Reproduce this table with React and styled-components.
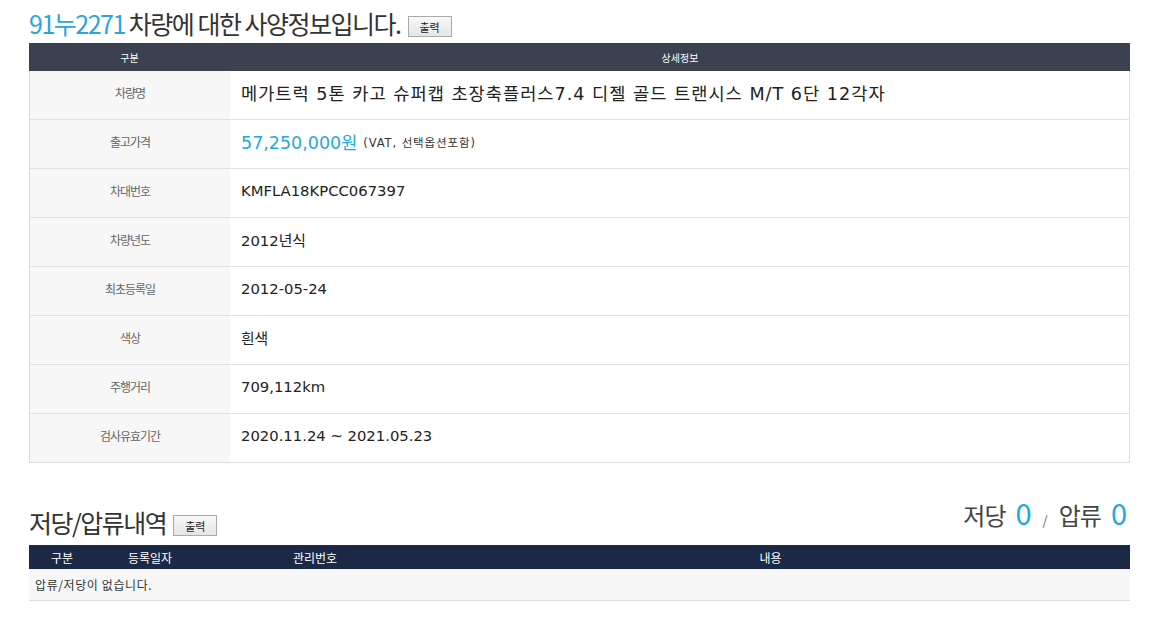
import React from 'react';
import styled, { createGlobalStyle } from 'styled-components';

const GlobalStyle = createGlobalStyle`
  body {
    margin: 0;
    background: #fff;
    font-family: 'Noto Sans CJK KR', 'Noto Sans', sans-serif;
    color: #333;
  }
`;

const Page = styled.div`
  width: 1101px;
  padding: 0 0 0 29px;
`;

const TitleRow = styled.div`
  display: flex;
  align-items: flex-end;
  justify-content: space-between;
  height: ${p => p.height || 43}px;
`;

const TitleLeft = styled.div`
  display: flex;
  align-items: center;
  padding-bottom: ${p => p.pb || 6}px;
`;

const Title = styled.h2`
  margin: 0;
  font-size: ${p => p.size || 25}px;
  font-weight: 400;
  letter-spacing: -1.5px;
  color: #333;
  line-height: 1;
  span { color: #2ea4dc; }
`;

const PrintButton = styled.button`
  margin-left: ${p => p.gap || 7}px;
  margin-top: 6px;
  width: 44px;
  height: 21px;
  padding: 0;
  font-family: 'Noto Sans CJK KR', sans-serif;
  font-size: 11px;
  color: #222;
  background: linear-gradient(#f8f8f8, #e6e6e6);
  border: 1px solid #aaa;
  border-radius: 0;
`;

const SpecTable = styled.div`
  border: 1px solid #ddd;
  border-top: none;
`;

const SpecHead = styled.div`
  display: grid;
  grid-template-columns: 201px 1fr;
  height: 28px;
  background: #3b414f;
  color: #fff;
  font-size: 10px;
  align-items: center;
  text-align: center;
  margin: 0 -1px;
`;

const SpecRow = styled.div`
  display: grid;
  grid-template-columns: 200px 1fr;
  height: 48px;
  border-bottom: 1px solid #e1e1e1;
  &:last-child { border-bottom: none; }
`;

const Label = styled.div`
  background: #f7f7f7;
  color: #666;
  font-size: 12px;
  letter-spacing: -1px;
  display: flex;
  align-items: center;
  justify-content: center;
  padding-bottom: 5px;
`;

const Value = styled.div`
  display: flex;
  align-items: center;
  padding: 0 0 5px 11px;
  font-family: 'DejaVu Sans', 'Noto Sans CJK KR', sans-serif;
  font-size: ${p => p.size || 14.8}px;
  letter-spacing: ${p => p.ls || 0}px;
  color: #222;
`;

const Price = styled.span`
  color: #1fa9de;
  font-size: 17.5px;
  letter-spacing: 0;
`;

const Note = styled.span`
  font-size: 11.5px;
  color: #333;
  margin-left: 6px;
  letter-spacing: 0.9px;
`;

const Counts = styled.div`
  display: flex;
  align-items: baseline;
  padding-bottom: 12px;
  padding-right: 4px;
  font-size: 24px;
  color: #444;
  letter-spacing: -1px;
`;

const Count = styled.span`
  color: #1fa9de;
  font-size: 29px;
  margin-left: 10px;
`;

const Slash = styled.span`
  font-size: 13px;
  color: #666;
  margin: 0 12px;
`;

const LienHead = styled.div`
  display: grid;
  grid-template-columns: 66px 110px 220px 1fr;
  height: 24px;
  background: #1b2947;
  color: #fff;
  font-size: 12px;
  align-items: center;
  text-align: center;
  div:last-child { padding-right: 14px; }
`;

const EmptyRow = styled.div`
  height: 31px;
  background: #f7f7f7;
  border-bottom: 1px solid #ddd;
  display: flex;
  align-items: center;
  padding-left: 6px;
  font-size: 12px;
  letter-spacing: 0.6px;
  color: #333;
`;

const Spacer = styled.div`
  height: ${p => p.h}px;
`;

const rows = [
  ['차량명', <Value size={17.6} ls={1} key="v">메가트럭 5톤 카고 슈퍼캡 초장축플러스7.4 디젤 골드 트랜시스 M/T 6단 12각자</Value>],
  ['출고가격', <Value key="v"><Price>57,250,000원</Price><Note>(VAT, 선택옵션포함)</Note></Value>],
  ['차대번호', <Value key="v">KMFLA18KPCC067397</Value>],
  ['차량년도', <Value key="v">2012년식</Value>],
  ['최초등록일', <Value key="v">2012-05-24</Value>],
  ['색상', <Value key="v">흰색</Value>],
  ['주행거리', <Value key="v">709,112km</Value>],
  ['검사유효기간', <Value key="v">2020.11.24 ~ 2021.05.23</Value>],
];

export default function App() {
  return (
    <Page>
      <GlobalStyle />
      <TitleRow>
        <TitleLeft>
          <Title><span>91누2271</span> 차량에 대한 사양정보입니다.</Title>
          <PrintButton>출력</PrintButton>
        </TitleLeft>
      </TitleRow>
      <SpecTable>
        <SpecHead>
          <div>구분</div>
          <div>상세정보</div>
        </SpecHead>
        {rows.map(([label, value]) => (
          <SpecRow key={label}>
            <Label>{label}</Label>
            {value}
          </SpecRow>
        ))}
      </SpecTable>
      <Spacer h={38} />
      <TitleRow height={44}>
        <TitleLeft pb={9}>
          <Title size={25}>저당/압류내역</Title>
          <PrintButton gap={7}>출력</PrintButton>
        </TitleLeft>
        <Counts>
          저당<Count>0</Count><Slash>/</Slash>압류<Count>0</Count>
        </Counts>
      </TitleRow>
      <LienHead>
        <div>구분</div>
        <div>등록일자</div>
        <div>관리번호</div>
        <div>내용</div>
      </LienHead>
      <EmptyRow>압류/저당이 없습니다.</EmptyRow>
    </Page>
  );
}
